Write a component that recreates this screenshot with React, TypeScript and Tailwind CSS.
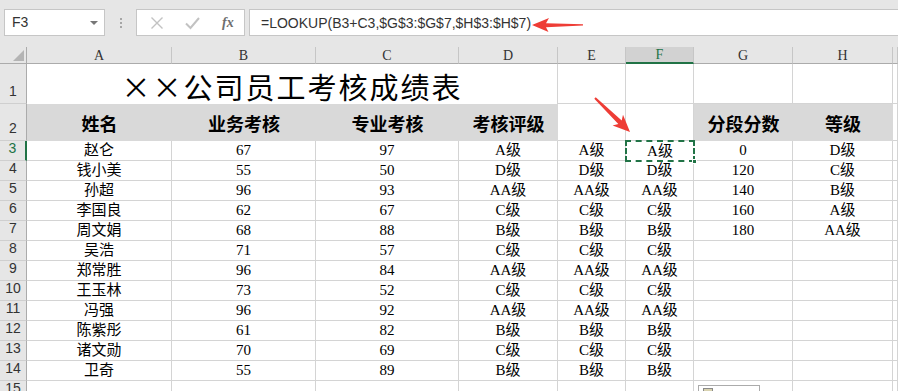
import React from "react";

const serif = "font-['Liberation_Serif','Noto_Sans_CJK_SC',serif]";
const cjkBold = "font-['Noto_Sans_CJK_SC',sans-serif] font-bold";

type Row = {
  name: string;
  b: string;
  c: string;
  d: string;
  e: string;
  f: string;
  g?: string;
  h?: string;
};

const rows: Row[] = [
  { name: "赵仑", b: "67", c: "97", d: "A级", e: "A级", f: "A级", g: "0", h: "D级" },
  { name: "钱小美", b: "55", c: "50", d: "D级", e: "D级", f: "D级", g: "120", h: "C级" },
  { name: "孙超", b: "96", c: "93", d: "AA级", e: "AA级", f: "AA级", g: "140", h: "B级" },
  { name: "李国良", b: "62", c: "67", d: "C级", e: "C级", f: "C级", g: "160", h: "A级" },
  { name: "周文娟", b: "68", c: "88", d: "B级", e: "B级", f: "B级", g: "180", h: "AA级" },
  { name: "吴浩", b: "71", c: "57", d: "C级", e: "C级", f: "C级" },
  { name: "郑常胜", b: "96", c: "84", d: "AA级", e: "AA级", f: "AA级" },
  { name: "王玉林", b: "73", c: "52", d: "C级", e: "C级", f: "C级" },
  { name: "冯强", b: "96", c: "92", d: "AA级", e: "AA级", f: "AA级" },
  { name: "陈紫彤", b: "61", c: "82", d: "B级", e: "B级", f: "B级" },
  { name: "诸文勋", b: "70", c: "69", d: "C级", e: "C级", f: "C级" },
  { name: "卫奇", b: "55", c: "89", d: "B级", e: "B级", f: "B级" },
];

const columns = ["A", "B", "C", "D", "E", "F", "G", "H", ""];

function RowHead({ n, active }: { n: number; active?: boolean }) {
  return (
    <div
      className={
        "flex items-end justify-center pb-[1px] bg-[#e6e6e6] border-b border-[#cfcfcf] text-[14px] font-['Liberation_Sans',sans-serif] " +
        (active
          ? "border-r-2 border-r-[#217346] text-[#217346] bg-[#dedede]"
          : "border-r border-r-[#ababab] text-[#333]")
      }
    >
      {n}
    </div>
  );
}

function Cell({ children }: { children?: React.ReactNode }) {
  return (
    <div
      className={
        "flex items-center justify-center border-r border-b border-[#d4d4d4] text-[15px] leading-[19px] text-black " +
        serif
      }
    >
      {children}
    </div>
  );
}

function HeadCell({ children, gray }: { children?: React.ReactNode; gray?: boolean }) {
  return (
    <div
      className={
        "flex items-center justify-center pt-[2px] text-[18px] text-black " +
        cjkBold +
        (gray ? " bg-[#d9d9d9]" : " border-r border-b border-[#d4d4d4]")
      }
    >
      {children}
    </div>
  );
}

function Toolbar() {
  return (
    <div className="h-[47px] bg-[#e6e6e6] flex items-start pt-[9px] pl-[4px] font-['Liberation_Sans',sans-serif]">
      <div className="w-[101px] h-[27px] bg-white border border-[#c6c6c6] flex items-center justify-between pl-[7px] pr-[6px] text-[14px] text-[#333]">
        <span>F3</span>
        <span className="w-0 h-0 border-l-[4px] border-r-[4px] border-t-[4px] border-l-transparent border-r-transparent border-t-[#777]" />
      </div>
      <div className="w-[31px] h-[27px] flex flex-col items-center justify-center gap-[2px]">
        <span className="w-[2px] h-[2px] bg-[#a6a6a6]" />
        <span className="w-[2px] h-[2px] bg-[#a6a6a6]" />
        <span className="w-[2px] h-[2px] bg-[#a6a6a6]" />
      </div>
      <div className="w-[109px] h-[27px] bg-white border border-[#c6c6c6] flex items-center">
        <svg width="14" height="14" viewBox="0 0 14 14" className="ml-[13px]">
          <path d="M1.5 1.5 L12.5 12.5 M12.5 1.5 L1.5 12.5" stroke="#c2c2c2" strokeWidth="1.4" fill="none" />
        </svg>
        <svg width="15" height="14" viewBox="0 0 15 14" className="ml-[21px]">
          <path d="M1 7.5 L5.5 12 L14 2" stroke="#c2c2c2" strokeWidth="2" fill="none" />
        </svg>
        <span className="ml-[22px] text-[14px] italic font-bold text-[#6e6e6e] font-['Liberation_Serif',serif] leading-none">
          fx
        </span>
      </div>
      <div className="ml-[4px] flex-1 h-[27px] bg-white border border-[#c6c6c6] border-r-0 flex items-center pl-[11px] pt-[2px] text-[14px] text-[#333]">
        =LOOKUP(B3+C3,$G$3:$G$7,$H$3:$H$7)
      </div>
    </div>
  );
}

export default function App() {
  return (
    <div className="relative w-[898px] h-[391px] overflow-hidden bg-white">
      <Toolbar />

      <div className="grid grid-cols-[27px_145px_144px_143px_99px_68px_68px_99px_100px_1fr] grid-rows-[17px_40px_37px_repeat(13,20px)]">
        {/* column headers */}
        <div className="flex items-end justify-end pr-[2px] pb-[2px] bg-[#e6e6e6] border-r border-r-[#ababab] border-b border-b-[#ababab]">
          <svg width="11" height="11" viewBox="0 0 11 11">
            <polygon points="11,0 11,11 0,11" fill="#b4b4b4" />
          </svg>
        </div>
        {columns.map((c, i) => (
          <div
            key={i}
            className={
              "flex items-center justify-center border-r border-r-[#c6c6c6] text-[14px] font-['Liberation_Serif',serif] " +
              (c === "F"
                ? "bg-[#d2d2d2] border-b-2 border-b-[#217346] text-[#217346]"
                : "bg-[#e6e6e6] border-b border-b-[#ababab] text-[#333]")
            }
          >
            {c}
          </div>
        ))}

        {/* row 1: title */}
        <RowHead n={1} />
        <div className="col-span-4 flex items-center justify-center pt-[6px] border-r border-[#d4d4d4] text-[29px] tracking-[2px] text-black font-['Noto_Sans_CJK_SC',sans-serif]">
          ××公司员工考核成绩表
        </div>
        <Cell />
        <Cell />
        <Cell />
        <Cell />
        <Cell />

        {/* row 2: headings */}
        <RowHead n={2} />
        <HeadCell gray>姓名</HeadCell>
        <HeadCell gray>业务考核</HeadCell>
        <HeadCell gray>专业考核</HeadCell>
        <HeadCell gray>考核评级</HeadCell>
        <HeadCell />
        <HeadCell />
        <HeadCell gray>分段分数</HeadCell>
        <HeadCell gray>等级</HeadCell>
        <Cell />

        {/* data rows */}
        {rows.map((r, i) => (
          <React.Fragment key={i}>
            <RowHead n={i + 3} active={i === 0} />
            <Cell>{r.name}</Cell>
            <Cell>{r.b}</Cell>
            <Cell>{r.c}</Cell>
            <Cell>{r.d}</Cell>
            <Cell>{r.e}</Cell>
            {i === 0 ? (
              <div className="relative">
                <div className={"absolute -left-[1px] -top-[1px] w-[70px] h-[22px] border-2 border-dashed border-[#217346] flex items-center justify-center text-[15px] leading-[19px] text-black " + serif}>
                  {r.f}
                </div>
                <span className="absolute -right-[3px] -bottom-[3px] w-[5px] h-[5px] bg-[#217346] border border-white" />
              </div>
            ) : (
              <Cell>{r.f}</Cell>
            )}
            <Cell>{r.g}</Cell>
            <Cell>{r.h}</Cell>
            <Cell />
          </React.Fragment>
        ))}

        {/* row 15 */}
        <RowHead n={15} />
        {columns.map((_, i) => (
          <Cell key={i} />
        ))}
      </div>

      {/* paste options badge */}
      <div className="absolute left-[698px] top-[385px] w-[62px] h-[14px] bg-white border border-[#ababab] pl-[4px] pt-[2px]">
        <div className="w-[10px] h-[10px] bg-[#d9d3b0] border border-[#8a8a8a]" />
      </div>

      {/* red arrows */}
      <svg className="absolute left-0 top-0 pointer-events-none" width="898" height="391">
        <polygon
          points="532,25 549,18 546,23.2 583,24.3 583,25.4 546,27.3 548.5,32"
          fill="#ee3d36"
        />
        <polygon
          points="630,132 623,114.8 621.7,120.4 595.7,97.3 594.3,98.7 618.3,124 612.6,125.5"
          fill="#ee3d36"
        />
      </svg>
    </div>
  );
}
